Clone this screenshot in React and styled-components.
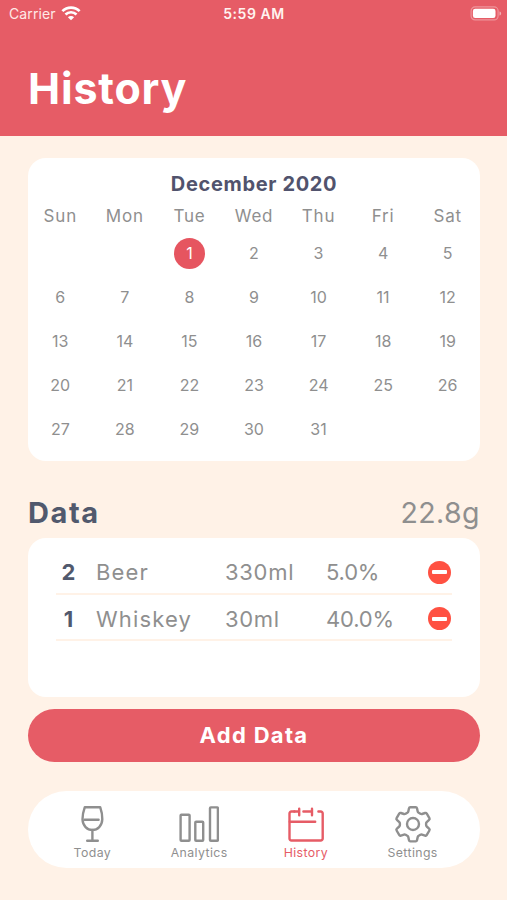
import React from "react"
import styled, { createGlobalStyle } from "styled-components"

const weekdays = ["Sun", "Mon", "Tue", "Wed", "Thu", "Fri", "Sat"]
const firstWeekday = 2
const selectedDay = 1
const days = Array.from({ length: 31 }, (_, i) => i + 1)

const drinks = [
  { count: 2, name: "Beer", volume: "330ml", percent: "5.0%" },
  { count: 1, name: "Whiskey", volume: "30ml", percent: "40.0%" },
]

const WifiIcon = () => (
  <svg width="20" height="15" viewBox="0 0 20 15" fill="none" stroke="#fff" strokeWidth="2.7">
    <path d="M1.4 5.1a12.2 12.2 0 0 1 17.2 0" />
    <path d="M4.5 8.5a7.8 7.8 0 0 1 11 0" />
    <path d="M10 14.3 6.9 11.2a4.4 4.4 0 0 1 6.2 0z" fill="#fff" stroke="none" />
  </svg>
)

const BatteryIcon = () => (
  <svg width="32" height="15" viewBox="0 0 32 15" fill="none">
    <rect x="1.1" y="0.9" width="27" height="13" rx="4" stroke="#fff" strokeOpacity="0.35" strokeWidth="1.2" />
    <rect x="2.9" y="2.7" width="22.6" height="9.4" rx="2.3" fill="#fff" />
    <path d="M29.5 5.4v4c1.2-.4 1.6-1.1 1.6-2s-.4-1.6-1.6-2z" fill="#fff" fillOpacity="0.5" />
  </svg>
)

const GlassIcon = () => (
  <svg width="40" height="40" viewBox="0 0 40 40">
    <path d="M12.8 3.2h15.4c1.4 4 2.2 8 2.1 12.1-.2 6.5-4.7 10.6-9.9 10.6s-9.7-4.1-9.9-10.6c-.1-4.1.9-8.1 2.3-12.1z" />
    <path d="M12.6 15.8h14M20.4 26v10M15.2 36.7h10.6" />
  </svg>
)

const ChartIcon = () => (
  <svg width="40" height="40" viewBox="0 0 40 40">
    <rect x="1.6" y="10.8" width="9" height="25.9" rx="0.8" />
    <rect x="16.3" y="17.8" width="7.9" height="18.9" rx="0.8" />
    <rect x="31" y="3.4" width="7.9" height="33.3" rx="0.8" />
  </svg>
)

const CalendarIcon = () => (
  <svg width="40" height="40" viewBox="0 0 40 40">
    <path d="M8.4 7.5H5.4a1.9 1.9 0 0 0-1.9 1.9v25.2a1.9 1.9 0 0 0 1.9 1.9h29.4a1.9 1.9 0 0 0 1.9-1.9V9.4a1.9 1.9 0 0 0-1.9-1.9h-2.4" />
    <path d="M13.2 4.8v6.4M26 4.8v6.4M17.4 7.5H26M8.4 7.5h4.8M3.8 17.7h25.4" />
  </svg>
)

const GearIcon = () => (
  <svg width="40" height="40" viewBox="0 0 40 40">
    <path d="M17.4 3.2h5.2a1.4 1.4 0 0 1 1.4 1.1l.7 3.2a2 2 0 0 0 1 1.3l1.7 1a2 2 0 0 0 1.6.2l3.1-1a1.4 1.4 0 0 1 1.7.7l2.6 4.4a1.4 1.4 0 0 1-.3 1.8l-2.4 2.2a2 2 0 0 0-.6 1.4v1.6a2 2 0 0 0 .6 1.4l2.4 2.2a1.4 1.4 0 0 1 .3 1.8l-2.6 4.4a1.4 1.4 0 0 1-1.7.7l-3.1-1a2 2 0 0 0-1.6.2l-1.7 1a2 2 0 0 0-1 1.3l-.7 3.2a1.4 1.4 0 0 1-1.4 1.1h-5.2a1.4 1.4 0 0 1-1.4-1.1l-.7-3.2a2 2 0 0 0-1-1.3l-1.7-1a2 2 0 0 0-1.6-.2l-3.1 1a1.4 1.4 0 0 1-1.7-.7l-2.6-4.4a1.4 1.4 0 0 1 .3-1.8l2.4-2.2a2 2 0 0 0 .6-1.4v-1.6a2 2 0 0 0-.6-1.4l-2.4-2.2a1.4 1.4 0 0 1-.3-1.8l2.6-4.4a1.4 1.4 0 0 1 1.7-.7l3.1 1a2 2 0 0 0 1.6-.2l1.7-1a2 2 0 0 0 1-1.3l.7-3.2a1.4 1.4 0 0 1 1.4-1.1z" />
    <circle cx="20" cy="20" r="6" />
  </svg>
)

const tabs = [
  { label: "Today", icon: <GlassIcon /> },
  { label: "Analytics", icon: <ChartIcon /> },
  { label: "History", icon: <CalendarIcon />, active: true },
  { label: "Settings", icon: <GearIcon /> },
]

const App = () => {
  return (
    <Screen>
      <GlobalStyle />
      <Header>
        <StatusBar>
          <Carrier>
            Carrier
            <WifiIcon />
          </Carrier>
          <Clock>5:59 AM</Clock>
          <Battery>
            <BatteryIcon />
          </Battery>
        </StatusBar>
        <PageTitle>History</PageTitle>
      </Header>
      <Content>
        <CalendarCard>
          <MonthTitle>December 2020</MonthTitle>
          <Weekdays>
            {weekdays.map((day) => (
              <span key={day}>{day}</span>
            ))}
          </Weekdays>
          <DayGrid>
            {days.map((day) => (
              <Day
                key={day}
                $start={day === 1 ? firstWeekday + 1 : undefined}
                $selected={day === selectedDay}
              >
                <span>{day}</span>
              </Day>
            ))}
          </DayGrid>
        </CalendarCard>
        <SectionHeader>
          <SectionTitle>Data</SectionTitle>
          <Total>22.8g</Total>
        </SectionHeader>
        <DataCard>
          {drinks.map((drink) => (
            <DrinkRow key={drink.name}>
              <Count>{drink.count}</Count>
              <Name>{drink.name}</Name>
              <Volume>{drink.volume}</Volume>
              <Percent>{drink.percent}</Percent>
              <RemoveButton aria-label={`Remove ${drink.name}`} />
            </DrinkRow>
          ))}
        </DataCard>
        <AddButton>Add Data</AddButton>
        <TabBar>
          {tabs.map((tab) => (
            <Tab key={tab.label} $active={tab.active}>
              {tab.icon}
              <span>{tab.label}</span>
            </Tab>
          ))}
        </TabBar>
      </Content>
    </Screen>
  )
}

export default App

const GlobalStyle = createGlobalStyle`
  * {
    box-sizing: border-box;
  }

  body {
    margin: 0;
    background: #fff2e7;
  }

  button {
    border: 0;
    padding: 0;
    font-family: inherit;
  }
`

const Screen = styled.div`
  height: 900px;
  overflow: hidden;
  display: flex;
  flex-direction: column;
  background: #fff2e7;
  color: #8f8f8f;
  font-family: Inter, "Open Sans", sans-serif;
`

const Header = styled.header`
  height: 136px;
  flex: none;
  background: #e65c66;
  color: #fff;
`

const StatusBar = styled.div`
  display: grid;
  grid-template-columns: 1fr auto 1fr;
  align-items: center;
  height: 27px;
  padding: 0 5px 0 9px;
  font-size: 14px;
`

const Carrier = styled.div`
  display: flex;
  align-items: center;
  gap: 5px;
  color: #ffe9e6;
  letter-spacing: 0.1px;
`

const Clock = styled.div`
  font-weight: 600;
  color: #fff3ef;
  letter-spacing: 0.55px;
  margin-left: -3px;
`

const Battery = styled.div`
  display: flex;
  justify-content: flex-end;
`

const PageTitle = styled.h1`
  margin: 0;
  padding: 36px 0 0 28px;
  font-size: 43px;
  line-height: 50px;
  font-weight: 700;
  letter-spacing: 0.8px;
`

const Content = styled.main`
  display: flex;
  flex-direction: column;
  padding: 22px 27px 0 28px;
`

const Card = styled.section`
  background: #fff;
  border-radius: 18px;
`

const CalendarCard = styled(Card)`
  height: 303px;
  padding-top: 12px;
`

const MonthTitle = styled.h2`
  margin: 0;
  text-align: center;
  color: #51536d;
  font-size: 20px;
  line-height: 28px;
  font-weight: 700;
  letter-spacing: 0.65px;
`

const Weekdays = styled.div`
  display: grid;
  grid-template-columns: repeat(7, 1fr);
  margin-top: 6px;
  text-align: center;
  font-size: 17px;
  line-height: 24px;
  letter-spacing: 0.8px;
`

const DayGrid = styled.div`
  display: grid;
  grid-template-columns: repeat(7, 1fr);
  grid-auto-rows: 44px;
  margin-top: 3px;
`

const Day = styled.div`
  display: flex;
  align-items: center;
  justify-content: center;
  grid-column-start: ${({ $start }) => $start || "auto"};
  font-size: 16px;

  span {
    width: 31px;
    border-radius: 50%;
    line-height: 31px;
    text-align: center;
    background: ${({ $selected }) => ($selected ? "#e65560" : "transparent")};
    color: ${({ $selected }) => ($selected ? "#fff" : "inherit")};
  }
`

const SectionHeader = styled.div`
  display: flex;
  justify-content: space-between;
  align-items: center;
  height: 77px;
  padding-top: 26px;
  line-height: 40px;
`

const SectionTitle = styled.h2`
  margin: 0;
  color: #51596d;
  font-size: 29px;
  font-weight: 700;
  letter-spacing: 1.6px;
`

const Total = styled.div`
  font-size: 28.5px;
  letter-spacing: 0.4px;
`

const DataCard = styled(Card)`
  height: 159px;
  padding: 10px 28px 0;
`

const DrinkRow = styled.div`
  display: grid;
  grid-template-columns: 40px 129px 101px 1fr 24px;
  align-items: center;
  height: 46.5px;
  padding-top: 4px;
  border-bottom: 2px solid #fff2e7;
  font-size: 22px;
`

const Count = styled.span`
  width: 25px;
  text-align: center;
  color: #51596d;
  font-weight: 700;
`

const Name = styled.span`
  letter-spacing: 1.15px;
`

const Volume = styled.span`
  letter-spacing: 0.7px;
`

const Percent = styled.span`
  letter-spacing: -0.2px;
`

const RemoveButton = styled.button`
  display: flex;
  align-items: center;
  justify-content: center;
  width: 23px;
  height: 23px;
  border-radius: 50%;
  background: #ff5142;

  &::before {
    content: "";
    width: 15px;
    height: 4px;
    border-radius: 1px;
    background: #fff;
  }
`

const AddButton = styled.button`
  height: 53px;
  margin-top: 12px;
  padding-bottom: 2px;
  border-radius: 27px;
  background: #e65c66;
  color: #fff;
  font-size: 22px;
  font-weight: 700;
  letter-spacing: 1.3px;
`

const TabBar = styled.nav`
  display: grid;
  grid-template-columns: repeat(4, 1fr);
  height: 77px;
  margin-top: 29px;
  padding: 13px 14px 0 11px;
  border-radius: 39px;
  background: #fff;
`

const Tab = styled.div`
  display: flex;
  flex-direction: column;
  align-items: center;
  color: ${({ $active }) => ($active ? "#e65c66" : "#8f8f8f")};
  font-size: 12.3px;
  line-height: 18px;
  letter-spacing: 0.4px;

  svg {
    fill: none;
    stroke: currentColor;
    stroke-width: 2.4;
    stroke-linecap: round;
    stroke-linejoin: round;
  }
`
